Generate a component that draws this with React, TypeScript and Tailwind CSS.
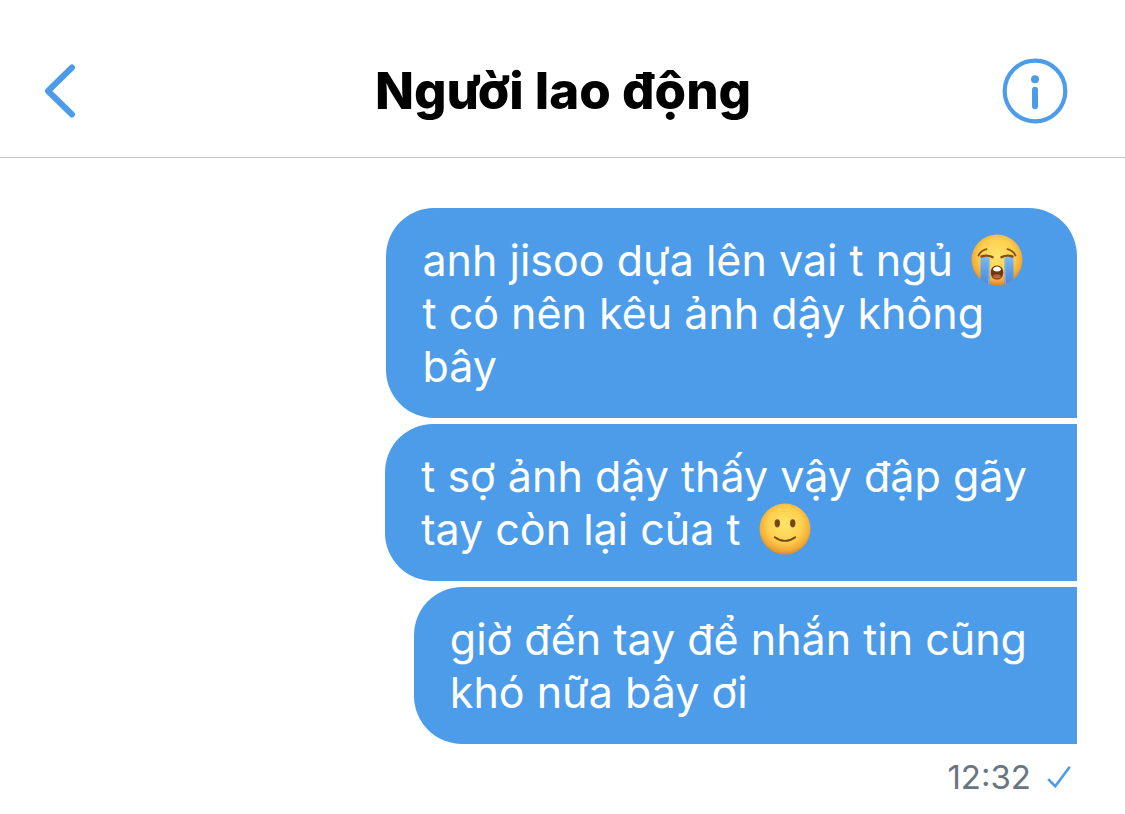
import type { ReactNode } from "react";

const CONVERSATION_NAME = "Người lao động";

function CryingEmoji() {
  return (
    <svg role="img" aria-label="Loudly crying face" viewBox="0 0 52 52" className="mr-1 ml-1.5 inline-block size-[52px] -my-2 align-[-2px]">
      <defs>
        <radialGradient id="cry-face" cx="50%" cy="42%" r="56%">
          <stop offset="0" stopColor="#ffe36a" />
          <stop offset="0.6" stopColor="#fdd04f" />
          <stop offset="0.88" stopColor="#f2ab37" />
          <stop offset="1" stopColor="#d98c2c" />
        </radialGradient>
        <linearGradient id="cry-tear" x1="0" y1="0" x2="0" y2="1">
          <stop offset="0" stopColor="#7db9f2" />
          <stop offset="0.5" stopColor="#5b9de8" />
          <stop offset="1" stopColor="#4a86dc" />
        </linearGradient>
        <clipPath id="cry-clip">
          <circle cx="26" cy="26" r="25.5" />
        </clipPath>
      </defs>
      <circle cx="26" cy="26" r="25.5" fill="url(#cry-face)" />
      <g clipPath="url(#cry-clip)">
        <path d="M9.5 23.5Q14 22 18.5 24V52H9.5Z" fill="url(#cry-tear)" />
        <path d="M33.5 24Q38 22 42.5 23.5V52H33.5Z" fill="url(#cry-tear)" />
        <path d="M17.8 25V50M34.2 25V50" stroke="#7fb8f0" strokeWidth="1" />
      </g>
      <g fill="none" stroke="#80501e" strokeLinecap="round">
        <path d="M7.5 21.5Q10 16.5 15.5 15.2M44.5 21.5Q42 16.5 36.5 15.2" strokeWidth="1.7" />
        <path d="M10.5 22.5Q16 20.5 21.5 23.2M41.5 22.5Q36 20.5 30.5 23.2" strokeWidth="2.4" />
      </g>
      <path d="M26 31.5C22 31.5 19.8 34.5 19.8 38.5C19.8 43 22.4 45.5 26 45.5S32.2 43 32.2 38.5C32.2 34.5 30 31.5 26 31.5Z" fill="#6d3715" />
      <path d="M22 35.3Q23 32.5 26 32.5T30 35.3Q29.5 37.5 26 37.5T22 35.3Z" fill="#fff" />
      <path d="M21.5 42.3Q23 40.2 26 40.2T30.5 42.3Q29 44.8 26 44.8T21.5 42.3Z" fill="#b8643f" />
    </svg>
  );
}

function SmileEmoji() {
  return (
    <svg role="img" aria-label="Slightly smiling face" viewBox="0 0 52 52" className="mr-1 ml-1.5 inline-block size-[52px] -my-2 align-[-2px]">
      <defs>
        <radialGradient id="smile-face" cx="50%" cy="42%" r="56%">
          <stop offset="0" stopColor="#ffe36a" />
          <stop offset="0.6" stopColor="#fdd04f" />
          <stop offset="0.88" stopColor="#f4ad38" />
          <stop offset="1" stopColor="#df922b" />
        </radialGradient>
      </defs>
      <circle cx="26" cy="26" r="25.5" fill="url(#smile-face)" />
      <ellipse cx="18.3" cy="20.3" rx="2.7" ry="4.1" fill="#74461a" />
      <ellipse cx="33.7" cy="20.3" rx="2.7" ry="4.1" fill="#74461a" />
      <path d="M15.8 34.2Q26 41.6 36.2 34.2" fill="none" stroke="#74461a" strokeWidth="1.9" strokeLinecap="round" />
    </svg>
  );
}

const MESSAGES: { id: number; body: ReactNode }[] = [
  {
    id: 1,
    body: (
      <>
        anh jisoo dựa lên vai t ngủ <CryingEmoji />
        <br />t có nên kêu ảnh dậy không
        <br />
        bây
      </>
    )
  },
  {
    id: 2,
    body: (
      <>
        t sợ ảnh dậy thấy vậy đập gãy
        <br />
        tay còn lại của t <SmileEmoji />
      </>
    )
  },
  {
    id: 3,
    body: (
      <>
        giờ đến tay để nhắn tin cũng
        <br />
        khó nữa bây ơi
      </>
    )
  }
];

function Header() {
  return (
    <header className="flex items-center justify-between border-b border-[#c3c3cb] pt-[58px] pr-[57px] pb-[33px] pl-[44px]">
      <button type="button" aria-label="Back" className="flex w-20 text-[#4c9ce9]">
        <svg viewBox="0 0 32 56" className="h-[56px] w-[32px]" fill="none" stroke="currentColor" strokeWidth="6" strokeLinecap="round" strokeLinejoin="round">
          <path d="M28 4.5L4 28L28 51.5" />
        </svg>
      </button>
      <h1 className="text-[51px] leading-[60px] font-extrabold text-black">{CONVERSATION_NAME}</h1>
      <button type="button" aria-label="Conversation info" className="text-[#4c9ce9]">
        <svg viewBox="0 0 66 66" className="size-[66px]" fill="none">
          <circle cx="33" cy="33" r="30.3" stroke="currentColor" strokeWidth="4.2" />
          <circle cx="33" cy="21.2" r="4" fill="currentColor" />
          <path d="M33 31.8V48.2" stroke="currentColor" strokeWidth="6" strokeLinecap="round" />
        </svg>
      </button>
    </header>
  );
}

function MessageBubble({ children, first }: { children: ReactNode; first: boolean }) {
  return (
    <li
      className={`w-fit rounded-l-[48px] bg-[#4c9ce9] pt-[26px] pr-[50px] pb-[25px] pl-9 text-[43px] leading-[53px] text-white ${first ? "rounded-tr-[48px]" : ""}`}
    >
      {children}
    </li>
  );
}

export default function App() {
  return (
    <div className="min-h-screen bg-white font-['Inter','Liberation_Sans',sans-serif]">
      <Header />
      <main className="flex flex-col items-end pt-[50px] pr-12 pb-4">
        <ul className="flex flex-col items-end gap-1.5">
          {MESSAGES.map((message, idx) => (
            <MessageBubble key={message.id} first={idx === 0}>
              {message.body}
            </MessageBubble>
          ))}
        </ul>
        <div className="mt-3 flex items-center gap-4 pr-1.5 text-[33px] leading-[42px] text-[#697580]">
          <time dateTime="12:32">12:32</time>
          <svg role="img" aria-label="Sent" viewBox="0 0 24 24" className="size-6" fill="none" stroke="#4c9ce9" strokeWidth="2.6">
            <path d="M1.2 14.2L8.2 21.2L22.8 1.8" />
          </svg>
        </div>
      </main>
    </div>
  );
}
